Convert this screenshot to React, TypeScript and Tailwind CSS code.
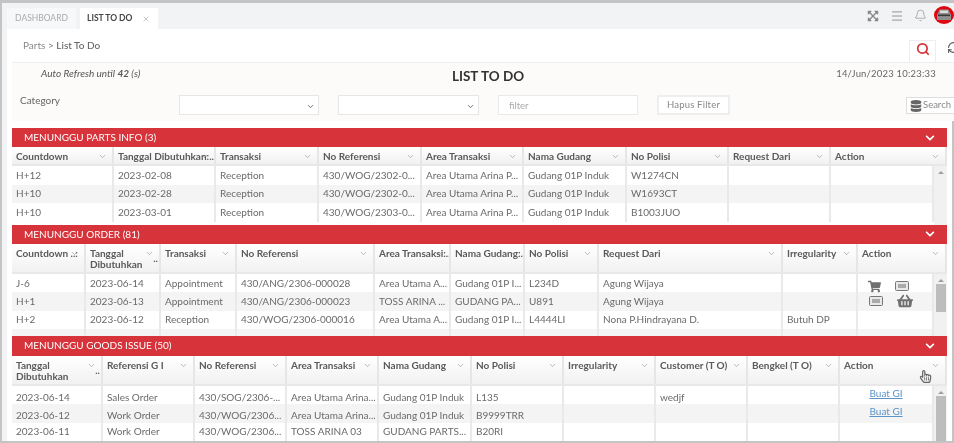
import { Bell, ChevronDown, Menu, RefreshCw, Search, X } from "lucide-react";
import { FaChevronDown, FaDatabase, FaExpandArrowsAlt, FaRegHandPointer, FaShoppingBasket, FaShoppingCart } from "react-icons/fa";
import type { ReactNode } from "react";

function CarAvatar() {
  return (
    <svg width="20" height="18" viewBox="0 0 20 18">
      <ellipse cx="10" cy="9" rx="10" ry="9" fill="#e0060f" />
      <path d="M3 9 L5.5 3.5 H14.5 L17 9 V14 H3 Z" fill="#8f8f8f" />
      <rect x="4" y="8.5" width="12" height="1.6" fill="#3a3a3a" />
      <rect x="6" y="4.5" width="8" height="2.5" fill="#dcdcdc" />
    </svg>
  );
}

function CardIcon() {
  return (
    <svg width="14" height="10" viewBox="0 0 14 10">
      <rect x="0.5" y="0.5" width="13" height="9" rx="1" fill="#e8e8e8" stroke="#777" />
      <rect x="3" y="3" width="8" height="4" fill="#aaa" />
    </svg>
  );
}

function HeaderCell({ label, more, wrap }: { label: string; more?: boolean; wrap?: boolean }) {
  return (
    <div className="relative h-full overflow-hidden border-r-2 border-[#e6e6e6] pl-[4px] pt-[4px] font-bold text-[#5a5a5a]">
      <span className={`block leading-[11.5px] ${wrap ? "w-[60px]" : "whitespace-nowrap"}`}>{label}</span>
      <ChevronDown size={9} strokeWidth={1.5} className="absolute right-[5px] top-[5px] text-[#888]" />
      {more && <span className="absolute bottom-[6px] right-[1px]">..</span>}
    </div>
  );
}

function ScrollBar({ thumb }: { thumb: string }) {
  return (
    <div className="flex w-[13px] shrink-0 flex-col items-center bg-[#f1f1f1]">
      <div className="mt-[5px] h-0 w-0 border-x-[3px] border-b-[3px] border-x-transparent border-b-[#a0a0a0]" />
      <div className={thumb} />
    </div>
  );
}

type SectionProps = {
  title: string;
  headCols: string;
  bodyCols: string;
  headH: string;
  bodyH: string;
  headers: { label: string; more?: boolean; wrap?: boolean }[];
  rows: ReactNode[][];
  thumb: string;
  barH: string;
};

function Section({ title, headCols, bodyCols, headH, bodyH, headers, rows, thumb, barH }: SectionProps) {
  return (
    <section>
      <div className={`flex ${barH} items-center justify-between bg-[#d6333a] pl-[12px] pr-[12px] text-[10px] text-white`}>
        <span>{title}</span>
        <FaChevronDown size={10} />
      </div>
      <div className={`grid ${headCols} ${headH} border-b-2 border-[#e8e8e8] bg-gradient-to-b from-white to-[#f1f1f1]`}>
        {headers.map((h) => (
          <HeaderCell key={h.label} label={h.label} more={h.more} wrap={h.wrap} />
        ))}
      </div>
      <div className={`flex ${bodyH} overflow-hidden`}>
        <div className="min-w-0 flex-1">
          {rows.map((row, i) => (
            <div key={i} className={`grid h-[18.5px] ${bodyCols} ${i % 2 === 1 ? "bg-[#f4f4f4]" : "bg-white"}`}>
              {row.map((cell, j) => (
                <div key={j} className="flex items-center overflow-visible whitespace-nowrap border-r-2 border-[#e9e9e9] pl-[4px] text-[#6a6a6a]">
                  {cell}
                </div>
              ))}
            </div>
          ))}
        </div>
        <ScrollBar thumb={thumb} />
      </div>
    </section>
  );
}

function PlainSelect({ className }: { className: string }) {
  return (
    <div className={`relative h-[20px] shrink-0 ${className}`}>
      <select className="h-full w-full appearance-none border border-[#e6e6e6] bg-white text-[10px]" />
      <ChevronDown size={9} strokeWidth={2} className="pointer-events-none absolute right-[4px] top-[7px] text-[#444]" />
    </div>
  );
}

const gi = (
  <a className="mb-[8px] w-full pr-[4px] text-center text-[#5b93c9] underline">Buat GI</a>
);

export default function App() {
  return (
    <div className="relative flex h-[443px] w-[954px] flex-col overflow-hidden bg-[#c4c4c4] pb-[2px] pl-[2px] pt-[3px] font-['Lato',sans-serif] text-[10px] blur-[0.35px]">
      {/* top tab bar */}
      <div className="flex h-[26px] shrink-0 items-end bg-[#f2f3f5] pl-[5px]">
        <div className="flex h-[21px] w-[69px] items-center justify-center bg-[#f7f8f9] text-[8.5px] text-[#aaa]">DASHBOARD</div>
        <div className="ml-[4px] flex h-[21px] w-[78px] items-center gap-[10px] bg-white pl-[7px] text-[8.5px] font-bold text-[#444]">
          LIST TO DO
          <X size={8} className="text-[#aaa]" />
        </div>
        <div className="ml-auto mb-[4px] flex items-center text-[#888]">
          <FaExpandArrowsAlt size={12} />
          <Menu size={14} strokeWidth={1.5} className="ml-[11px]" />
          <Bell size={13} strokeWidth={1.2} className="ml-[10px]" />
          <div className="ml-[7px] mb-[1px]">
            <CarAvatar />
          </div>
        </div>
      </div>

      <div className="flex min-h-0 flex-1 flex-col bg-[#f2f3f5] pl-[5px]">
        <div className="flex min-h-0 flex-1 flex-col bg-white">
          {/* breadcrumb */}
          <div className="flex h-[33px] shrink-0 items-end overflow-hidden">
            <div className="mb-[9px] ml-[16px] text-[#888]">
              Parts <span className="text-[#777]">&gt;</span> <span className="font-medium text-[#666]">List To Do</span>
            </div>
            <div className="ml-auto flex h-[22px] w-[27px] items-center justify-center border-x border-t border-[#eee] bg-white pb-[5px]">
              <Search size={14} strokeWidth={3} className="text-[#d6333a]" />
            </div>
            <RefreshCw size={13} className="ml-[11px] mb-[8px] shrink-0 -mr-[6px] text-[#555]" />
          </div>

          {/* filter panel */}
          <div className="ml-[5px] h-[59px] shrink-0 overflow-hidden border-t border-[#eee] bg-[#fdfbfa]">
            <div className="flex h-[30px] items-start">
              <div className="w-[400px] shrink-0 pl-[29px] pt-[3px] text-[10px] italic text-[#555]">
                Auto Refresh until <b className="font-bold">42</b> (s)
              </div>
              <div className="w-[152px] shrink-0 pt-[3px] text-center text-[13.5px] font-bold text-[#333]">LIST TO DO</div>
              <div className="ml-auto mr-[18px] pt-[4px] text-[9.5px] tracking-[0.2px] text-[#666]">14/Jun/2023 10:23:33</div>
            </div>
            <div className="flex items-start pl-[8px] pt-[2px]">
              <div className="-mt-[2px] w-[159px] shrink-0 text-[10px] text-[#666]">Category</div>
              <PlainSelect className="w-[140px]" />
              <PlainSelect className="ml-[19px] w-[141px]" />
              <input placeholder="filter" className="ml-[19px] h-[20px] w-[140px] shrink-0 border border-[#eaeaea] bg-white pl-[10px] text-[9.5px] placeholder:text-[#aaa]" />
              <button className="ml-[19px] h-[20px] w-[73px] shrink-0 border-2 border-[#eee] bg-white text-[9.5px] tracking-[0.2px] text-[#888]">Hapus Filter</button>
              <div className="ml-[176px] mt-[2px] flex h-[17px] w-[60px] shrink-0 items-center gap-[1px] border border-[#ddd] bg-white pl-[3px] text-[9.5px] text-[#888]">
                <FaDatabase size={12} className="text-[#666]" />
                Search
              </div>
            </div>
          </div>

          {/* tables */}
          <div className="flex min-h-0 flex-1 flex-col overflow-hidden border-r-2 border-[#c4c4c4] pl-[5px] pr-[5px] pt-[7px]">
            <Section
              title="MENUNGGU PARTS INFO (3)"
              barH="h-[19px]"
              headH="h-[19px]"
              bodyH="h-[58.5px]"
              headCols="grid-cols-[102px_102px_103px_103px_102px_103px_102px_102px_116px]"
              bodyCols="grid-cols-[102px_102px_103px_103px_102px_103px_102px_102px_103px]"
              headers={[
                { label: "Countdown" },
                { label: "Tanggal Dibutuhkan:.." },
                { label: "Transaksi" },
                { label: "No Referensi" },
                { label: "Area Transaksi" },
                { label: "Nama Gudang" },
                { label: "No Polisi" },
                { label: "Request Dari" },
                { label: "Action" },
              ]}
              thumb="hidden"
              rows={[
                ["H+12", "2023-02-08", "Reception", "430/WOG/2302-0...", "Area Utama Arina P...", "Gudang 01P Induk", "W1274CN", "", ""],
                ["H+10", "2023-02-28", "Reception", "430/WOG/2302-0...", "Area Utama Arina P...", "Gudang 01P Induk", "W1693CT", "", ""],
                ["H+10", "2023-03-01", "Reception", "430/WOG/2303-0...", "Area Utama Arina P...", "Gudang 01P Induk", "B1003JUO", "", ""],
              ]}
            />
            <Section
              title="MENUNGGU ORDER (81)"
              barH="h-[19px]"
              headH="h-[30px]"
              bodyH="h-[62px]"
              headCols="grid-cols-[74px_75px_76px_138px_76px_74px_74px_184px_75px_89px]"
              bodyCols="grid-cols-[74px_75px_76px_138px_76px_74px_74px_184px_75px_76px]"
              headers={[
                { label: "Countdown ..:" },
                { label: "Tanggal Dibutuhkan", more: true, wrap: true },
                { label: "Transaksi" },
                { label: "No Referensi" },
                { label: "Area Transaksi:.." },
                { label: "Nama Gudang:.." },
                { label: "No Polisi" },
                { label: "Request Dari" },
                { label: "Irregularity" },
                { label: "Action" },
              ]}
              thumb="mt-[2px] h-[28px] w-[10px] bg-[#bdbdbd]"
              rows={[
                ["J-6", "2023-06-14", "Appointment", "430/ANG/2306-000028", "Area Utama A...", "Gudang 01P I...", "L234D", "Agung Wijaya", "", (
                  <div className="flex items-center gap-[14px] pl-[6px] pt-[6px] text-[#707070]"><FaShoppingCart size={13} /><CardIcon /></div>
                )],
                ["H+1", "2023-06-13", "Appointment", "430/ANG/2306-000023", "TOSS ARINA ...", "GUDANG PA...", "U891", "Agung Wijaya", "", (
                  <div className="flex items-center gap-[14px] pl-[7px] text-[#707070]"><CardIcon /><FaShoppingBasket size={16} /></div>
                )],
                ["H+2", "2023-06-12", "Reception", "430/WOG/2306-000016", "Area Utama A...", "Gudang 01P I...", "L4444LI", "Nona P.Hindrayana D.", "Butuh DP", ""],
                ["", "", "", "", "", "", "", "", "", ""],
              ]}
            />
            <Section
              title="MENUNGGU GOODS ISSUE (50)"
              barH="h-[20px]"
              headH="h-[30px]"
              bodyH="h-[56px]"
              headCols="grid-cols-[91px_92px_92px_92px_93px_92px_92px_92px_92px_107px]"
              bodyCols="grid-cols-[91px_92px_92px_92px_93px_92px_92px_92px_92px_94px]"
              headers={[
                { label: "Tanggal Dibutuhkan", more: true, wrap: true },
                { label: "Referensi G I" },
                { label: "No Referensi" },
                { label: "Area Transaksi" },
                { label: "Nama Gudang" },
                { label: "No Polisi" },
                { label: "Irregularity" },
                { label: "Customer (T O)" },
                { label: "Bengkel (T O)" },
                { label: "Action" },
              ]}
              thumb="mt-[2px] h-[50px] w-[10px] bg-[#bdbdbd]"
              rows={[
                ["2023-06-14", "Sales Order", "430/SOG/2306-...", "Area Utama Arina...", "Gudang 01P Induk", "L135", "", "wedjf", "", gi],
                ["2023-06-12", "Work Order", "430/WOG/2306...", "Area Utama Arina...", "Gudang 01P Induk", "B9999TRR", "", "", "", gi],
                ["2023-06-11", "Work Order", "430/WOG/2306...", "TOSS ARINA 03", "GUDANG PARTS...", "B20RI", "", "", "", ""],
              ]}
            />
          </div>
        </div>
      </div>

      {/* mouse pointer captured in the screenshot */}
      <FaRegHandPointer size={13} className="absolute left-[919px] top-[370px] text-[#666]" />
    </div>
  );
}
